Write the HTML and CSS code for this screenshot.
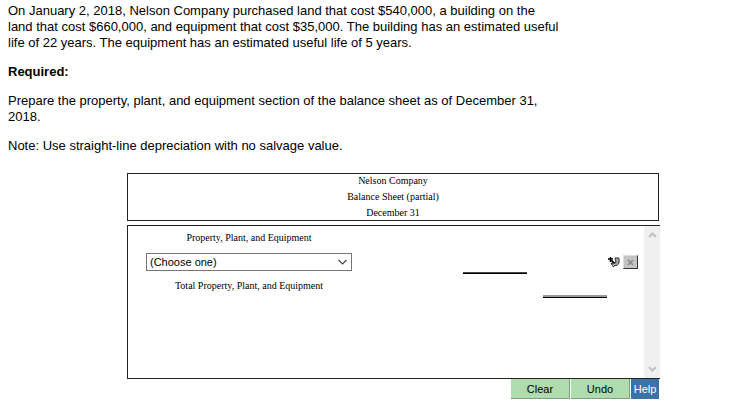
FILE: index.html
```html
<!DOCTYPE html>
<html lang="en">
<head>
    <meta charset="UTF-8">
    <title>Nelson Company</title>
    <link rel="stylesheet" href="styles.css">
</head>
<body>

<div class="problem">
    <p>On January 2, 2018, Nelson Company purchased land that cost $540,000, a building on the land that cost $660,000, and equipment that cost $35,000. The building has an estimated useful life of 22 years. The equipment has an estimated useful life of 5 years.</p>
    <p><b>Required:</b></p>
    <p>Prepare the property, plant, and equipment section of the balance sheet as of December 31, 2018.</p>
    <p>Note: Use straight-line depreciation with no salvage value.</p>
</div>

<form class="worksheet">
    <div class="sheet-title">
        <div>Nelson Company</div>
        <div>Balance Sheet (partial)</div>
        <div>December 31</div>
    </div>

    <div class="sheet">
        <div class="rows">
            <div class="row">
                <div class="label">Property, Plant, and Equipment</div>
            </div>
            <div class="row">
                <div class="label">
                    <select class="account" aria-label="Account">
                        <option>(Choose one)</option>
                    </select>
                </div>
                <div class="amount single"></div>
                <div class="amount"></div>
                <div class="tools">
                    <svg class="insert" width="12" height="12" viewBox="0 0 12 12">
                        <path d="M4 4.500L6 7 8 6.500 7.500 4 7 2h4v5L9 9.500H6.500L5.500 11 3 7.500h1.500z" fill="#aaa" stroke="#333" stroke-width="1"/>
                        <path d="M0 3h5M2.500 1v5M3.500 4.500l3 3" stroke="#000" stroke-width="1.500"/>
                    </svg>
                    <button type="button" class="remove" aria-label="Remove row">
                        <svg width="7" height="7" viewBox="0 0 7 7">
                            <path d="M1 1l5 5M6 1L1 6" stroke="#888" stroke-width="1.500"/>
                        </svg>
                    </button>
                </div>
            </div>
            <div class="row">
                <div class="label">Total Property, Plant, and Equipment</div>
                <div class="amount"></div>
                <div class="amount double"></div>
            </div>
        </div>
        <div class="scrollbar">
            <svg width="9" height="6" viewBox="0 0 9 6">
                <path d="M1 5l3.500-3.500L8 5" fill="none" stroke="#bfbfbf" stroke-width="2"/>
            </svg>
            <svg width="9" height="6" viewBox="0 0 9 6">
                <path d="M1 1l3.500 3.500L8 1" fill="none" stroke="#bfbfbf" stroke-width="2"/>
            </svg>
        </div>
    </div>

    <div class="actions">
        <button type="button" class="action">Clear</button>
        <button type="button" class="action">Undo</button>
        <button type="button" class="help">Help</button>
    </div>
</form>

</body>
</html>
```

FILE: styles.css
```css
body {
    margin: 0;
    padding: 3px 8px;
    background: #fff;
    color: #000;
    font-family: Arial, "Liberation Sans", sans-serif;
    font-size: 13px;
    line-height: 16px;
}

.problem {
    max-width: 554px;
}

.problem p {
    margin: 0 0 13px;
}

.worksheet {
    max-width: 533px;
    margin: 19px 0 0 119px;
    font-family: "Times New Roman", "Liberation Serif", serif;
    font-size: 10px;
}

.sheet-title {
    display: grid;
    gap: 2px;
    margin-right: 1px;
    border: 1px solid #222;
    line-height: 14px;
    text-align: center;
}

.sheet {
    display: flex;
    height: 152px;
    margin-top: 4px;
    border: 1px solid #222;
    border-right: none;
}

.rows {
    flex: 1;
}

.row {
    display: flex;
    height: 24px;
    gap: 16px;
    padding-left: 18px;
}

.label {
    display: flex;
    align-items: center;
    justify-content: center;
    width: 206px;
    margin-right: 95px;
}

.account {
    appearance: none;
    width: 100%;
    height: 18px;
    padding: 0 3px;
    border: 1px solid #767676;
    border-radius: 0;
    background: #fff url("data:image/svg+xml,%3Csvg xmlns='http://www.w3.org/2000/svg' width='9' height='6'%3E%3Cpath d='M.5 1l4 4 4-4' fill='none' stroke='%23444' stroke-width='1.2'/%3E%3C/svg%3E") no-repeat right 4px center;
    color: #000;
    font-family: Arial, "Liberation Sans", sans-serif;
    font-size: 11px;
}

.amount {
    box-sizing: border-box;
    width: 64px;
}

.single {
    border-bottom: 1px solid #000;
    box-shadow: inset 0 -1px #444;
}

.double {
    border-bottom: 1px solid #000;
    box-shadow: inset 0 -2px #999;
}

.tools {
    display: flex;
    align-items: center;
    gap: 3px;
    margin-left: -15px;
}

.remove {
    display: flex;
    align-items: center;
    justify-content: center;
    width: 15px;
    height: 14px;
    padding: 0;
    border: 1px solid;
    border-color: #ddd #333 #333 #ddd;
    background: #c3c3c3;
}

.scrollbar {
    display: flex;
    flex-direction: column;
    align-items: center;
    justify-content: space-between;
    width: 16px;
    padding: 6px 0;
    box-sizing: border-box;
    background: #f0f0f0;
}

.actions {
    display: flex;
    justify-content: flex-end;
    gap: 1px;
    margin-right: 1px;
}

.action,
.help {
    height: 20px;
    padding: 0;
    border: none;
    font-family: Arial, "Liberation Sans", sans-serif;
    font-size: 11px;
}

.action {
    width: 59px;
    border-right: 1px solid #7f9f7f;
    border-bottom: 1px solid #7f9f7f;
    background: #aedcae;
    color: #000;
}

.help {
    width: 28px;
    background: #3b73a8;
    color: #fff;
}
```
